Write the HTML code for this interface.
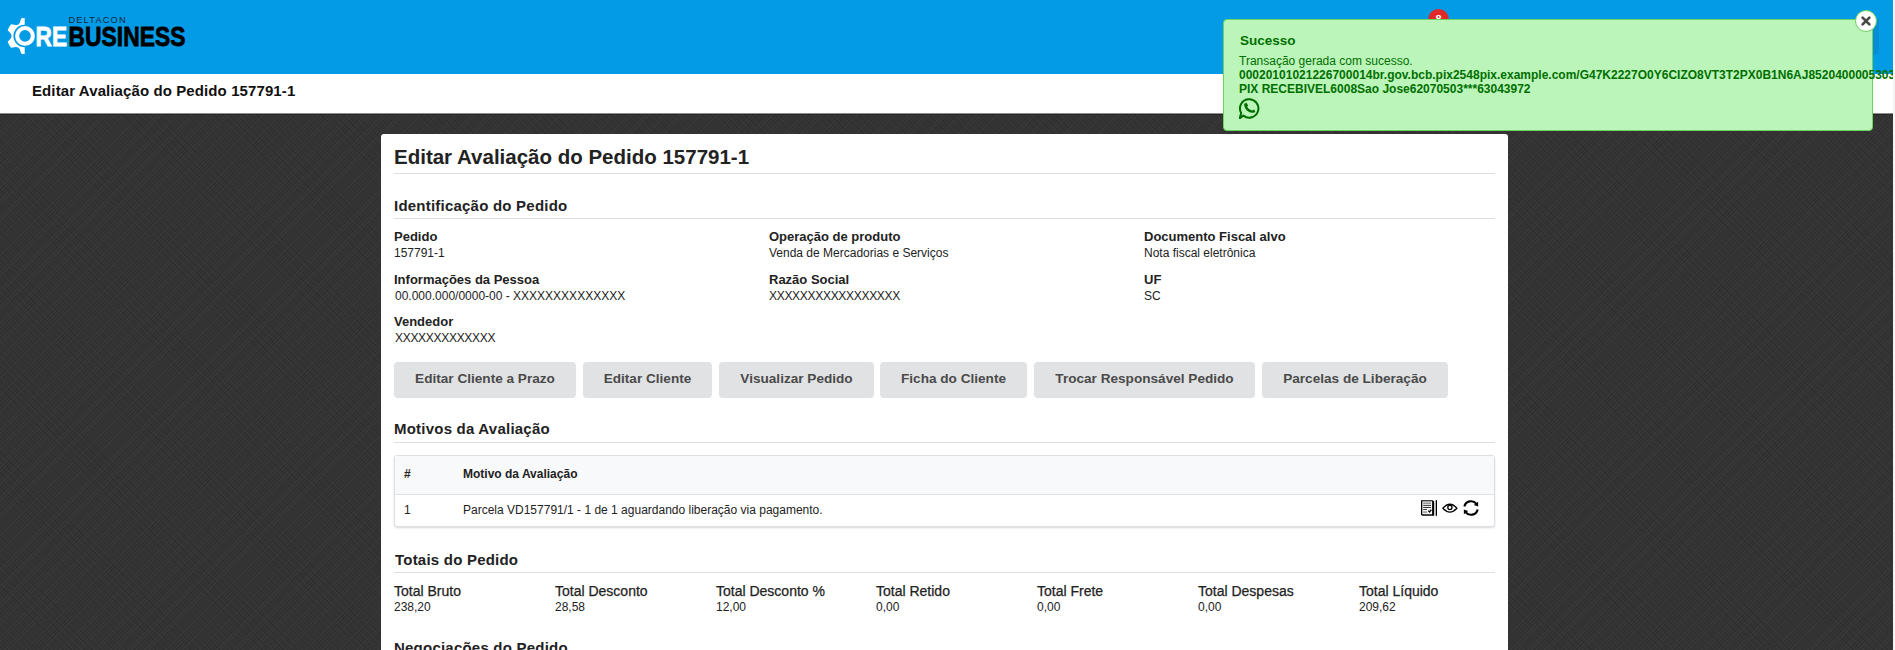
<!DOCTYPE html>
<html><head><meta charset="utf-8">
<style>
*{box-sizing:border-box;margin:0;padding:0}
html,body{width:1895px;height:650px;overflow:hidden;background:#fff}
body{position:relative;font-family:"Liberation Sans",sans-serif;color:#222}
.abs{position:absolute;white-space:nowrap}
#page{position:absolute;left:0;top:0;width:1893px;height:650px;overflow:hidden;
 background-color:#323232;
 background-image:repeating-linear-gradient(-45deg,rgba(255,255,255,0.03) 0 1px,rgba(0,0,0,0) 1px 3px),
 repeating-linear-gradient(45deg,rgba(0,0,0,0.07) 0 1px,rgba(0,0,0,0) 1px 5px);}
#hdr{position:absolute;left:0;top:0;width:1893px;height:74px;background:#039be5}
#sub{position:absolute;left:0;top:74px;width:1893px;height:39px;background:#fff;box-shadow:0 1px 0 #8c8c8c,0 2px 1px rgba(0,0,0,0.18)}
#sub .t{position:absolute;left:32px;top:82px;font-size:15px;font-weight:bold;color:#111;line-height:18px}
#card{position:absolute;left:381px;top:134px;width:1127px;height:600px;background:#fff;border-radius:3px}
.t{position:absolute;white-space:nowrap;line-height:1}
.hr{position:absolute;left:394px;width:1101px;height:1px;background:#dedede}
.lbl{font-size:13px;font-weight:bold;color:#222}
.val{font-size:12px;color:#222}
.sec{font-size:15px;font-weight:bold;color:#222;letter-spacing:0.22px}
.tl{font-size:14px;color:#222;-webkit-text-stroke:0.25px #222}
.btn{position:absolute;top:362px;height:36px;background:#e1e2e4;border-radius:4px;color:#4a4a4a;font-size:13.6px;font-weight:bold;text-align:center;line-height:34px;white-space:nowrap}
</style></head>
<body>
<div id="page">
 <div id="hdr"></div>
 <div id="sub"></div>
</div>

<!-- logo -->
<svg class="abs" style="left:0;top:0" width="200" height="70" viewBox="0 0 200 70">
 <defs><clipPath id="lh"><rect x="0" y="0" width="24.7" height="70"/></clipPath></defs>
 <path clip-path="url(#lh)" fill="#fff" fill-rule="evenodd" d="M29.72,22.93 L28.13,18.33 A18.0,18.0 0 0 0 21.27,18.33 L19.68,22.93 A4.2,4.2 0 0 1 15.89,25.12 L11.12,24.19 A18.0,18.0 0 0 0 7.68,30.14 L10.87,33.81 A4.2,4.2 0 0 1 10.87,38.19 L7.68,41.86 A18.0,18.0 0 0 0 11.12,47.81 L15.89,46.88 A4.2,4.2 0 0 1 19.68,49.07 L21.27,53.67 A18.0,18.0 0 0 0 28.13,53.67 L29.72,49.07 A4.2,4.2 0 0 1 33.51,46.88 L38.28,47.81 A18.0,18.0 0 0 0 41.72,41.86 L38.53,38.19 A4.2,4.2 0 0 1 38.53,33.81 L41.72,30.14 A18.0,18.0 0 0 0 38.28,24.19 L33.51,25.12 A4.2,4.2 0 0 1 29.72,22.93 Z M36.00,36.00 A11.30,11.30 0 1 0 13.40,36.00 A11.30,11.30 0 1 0 36.00,36.00 Z"/>
 <circle cx="25" cy="35.9" r="7.85" fill="none" stroke="#fff" stroke-width="4.1"/>
 <text x="35.6" y="45.8" font-family="Liberation Sans" font-weight="bold" font-size="27.4" fill="#fff" stroke="#fff" stroke-width="0.8" textLength="31.5" lengthAdjust="spacingAndGlyphs">RE</text>
 <text x="68.6" y="45.8" font-family="Liberation Sans" font-weight="bold" font-size="27.4" fill="#000" stroke="#000" stroke-width="0.8" textLength="116.8" lengthAdjust="spacingAndGlyphs">BUSINESS</text>
 <text x="68.4" y="22.8" font-family="Liberation Sans" font-size="9.2" fill="#15263a" textLength="57.2" lengthAdjust="spacing">DELTACON</text>
</svg>
<div class="t" style="left:32px;top:83px;font-size:15px;font-weight:bold;color:#111;letter-spacing:0.1px">Editar Avaliação do Pedido 157791-1</div>

<div id="card"></div>
<div class="t" style="left:394px;top:147px;font-size:20.5px;font-weight:bold">Editar Avaliação do Pedido 157791-1</div>
<div class="hr" style="top:173px"></div>
<div class="t sec" style="left:394px;top:198px">Identificação do Pedido</div>
<div class="hr" style="top:218px"></div>

<div class="t lbl" style="left:394px;top:230px">Pedido</div>
<div class="t val" style="left:394px;top:247px">157791-1</div>
<div class="t lbl" style="left:769px;top:230px">Operação de produto</div>
<div class="t val" style="left:769px;top:247px">Venda de Mercadorias e Serviços</div>
<div class="t lbl" style="left:1144px;top:230px">Documento Fiscal alvo</div>
<div class="t val" style="left:1144px;top:247px">Nota fiscal eletrônica</div>

<div class="t lbl" style="left:394px;top:273px">Informações da Pessoa</div>
<div class="t val" style="left:395px;top:290px">00.000.000/0000-00 - XXXXXXXXXXXXXX</div>
<div class="t lbl" style="left:769px;top:273px">Razão Social</div>
<div class="t val" style="left:769px;top:290px;letter-spacing:-0.3px">XXXXXXXXXXXXXXXXX</div>
<div class="t lbl" style="left:1144px;top:273px">UF</div>
<div class="t val" style="left:1144px;top:290px">SC</div>

<div class="t lbl" style="left:394px;top:315px">Vendedor</div>
<div class="t val" style="left:395px;top:332px;letter-spacing:-0.3px">XXXXXXXXXXXXX</div>

<div class="btn" style="left:394px;width:182px">Editar Cliente a Prazo</div>
<div class="btn" style="left:583px;width:129px">Editar Cliente</div>
<div class="btn" style="left:719px;width:155px">Visualizar Pedido</div>
<div class="btn" style="left:880px;width:147px">Ficha do Cliente</div>
<div class="btn" style="left:1034px;width:221px">Trocar Responsável Pedido</div>
<div class="btn" style="left:1262px;width:186px">Parcelas de Liberação</div>

<div class="t sec" style="left:394px;top:421px">Motivos da Avaliação</div>
<div class="hr" style="top:442px"></div>

<div class="abs" style="left:394px;top:455px;width:1101px;height:72px;border:1px solid #dcdfe3;border-radius:3px;background:#fff;box-shadow:0 1px 2px rgba(0,0,0,0.15)">
 <div class="abs" style="left:0;top:0;width:1099px;height:39px;background:#f8f9fa;border-bottom:1px solid #dee2e6"></div>
</div>
<div class="t" style="left:404px;top:468px;font-size:12px;font-weight:bold">#</div>
<div class="t" style="left:463px;top:468px;font-size:12px;font-weight:bold">Motivo da Avaliação</div>
<div class="t val" style="left:404px;top:504px">1</div>
<div class="t val" style="left:463px;top:504px">Parcela VD157791/1 - 1 de 1 aguardando liberação via pagamento.</div>

<div class="t sec" style="left:395px;top:552px">Totais do Pedido</div>
<div class="hr" style="top:572px"></div>

<div class="t tl" style="left:394px;top:584px">Total Bruto</div>
<div class="t val" style="left:394px;top:601px">238,20</div>
<div class="t tl" style="left:555px;top:584px">Total Desconto</div>
<div class="t val" style="left:555px;top:601px">28,58</div>
<div class="t tl" style="left:716px;top:584px">Total Desconto %</div>
<div class="t val" style="left:716px;top:601px">12,00</div>
<div class="t tl" style="left:876px;top:584px">Total Retido</div>
<div class="t val" style="left:876px;top:601px">0,00</div>
<div class="t tl" style="left:1037px;top:584px">Total Frete</div>
<div class="t val" style="left:1037px;top:601px">0,00</div>
<div class="t tl" style="left:1198px;top:584px">Total Despesas</div>
<div class="t val" style="left:1198px;top:601px">0,00</div>
<div class="t tl" style="left:1359px;top:584px">Total Líquido</div>
<div class="t val" style="left:1359px;top:601px">209,62</div>
<div class="t sec" style="left:394px;top:640px">Negociações do Pedido</div>

<!-- icons -->
<svg class="abs" style="left:1421px;top:500px" width="17" height="16" viewBox="0 0 17 16">
 <path d="M0,0.2 H11.6 L13.2,1.6 V15.8 H1.2 L0,14.6 Z" fill="#000"/>
 <rect x="1.3" y="1.3" width="9.8" height="13" fill="#f4f4f4"/>
 <rect x="2.2" y="2.4" width="7.8" height="1.6" fill="#9a9a9a"/>
 <rect x="2.2" y="4.9" width="7.8" height="0.9" fill="#222"/>
 <rect x="2.2" y="7" width="7.8" height="0.9" fill="#222"/>
 <rect x="2.2" y="9.1" width="3.8" height="0.9" fill="#333"/>
 <rect x="2.2" y="11.3" width="3.8" height="1.6" fill="#9a9a9a"/>
 <path d="M7.3,10.6 L8.6,11.9 L10.3,9.6" fill="none" stroke="#000" stroke-width="1.3"/>
 <rect x="14.7" y="0.2" width="1.3" height="15.6" fill="#000"/>
</svg>
<svg class="abs" style="left:1442px;top:503px" width="16" height="10" viewBox="0 -0.4 16 10">
 <path d="M0.9,4.8 Q7.9,-3.2 14.9,4.8 Q7.9,12.6 0.9,4.8 Z" fill="none" stroke="#000" stroke-width="1.35" stroke-linejoin="round"/>
 <circle cx="7.9" cy="4.1" r="2.1" fill="none" stroke="#000" stroke-width="1.35"/>
</svg>
<svg class="abs" style="left:1463px;top:500px" width="16" height="16" viewBox="0 0 16 16">
 <g fill="none" stroke="#000" stroke-width="2.1">
  <path d="M1.35,6.59 A6.8,6.8 0 0 1 13.4,3.9"/>
  <path d="M14.65,9.41 A6.8,6.8 0 0 1 2.6,12.1"/>
 </g>
 <path d="M15.1,1.7 L15.2,6.4 L10.8,4.9 Z" fill="#000"/>
 <path d="M0.9,14.3 L0.8,9.6 L5.2,11.1 Z" fill="#000"/>
</svg>

<!-- badge -->
<div class="abs" style="left:1428px;top:9px;width:21px;height:21px;border-radius:50%;background:#e02828;color:#fff;font-size:11px;font-weight:bold;text-align:center;line-height:21px">8</div>

<!-- toast -->
<div class="abs" style="left:1850px;top:19px;width:29px;height:36px;background:#078dd5;border-radius:0 0 4px 0"></div>
<div class="abs" style="left:1223px;top:19px;width:650px;height:112px;background:#bbf5b9;border:1px solid #6cd460;border-radius:4px"></div>
<div class="t" style="left:1240px;top:34px;font-size:13.5px;font-weight:bold;color:#006f00">Sucesso</div>
<div class="t" style="left:1239px;top:55px;font-size:12px;color:#006f00">Transação gerada com sucesso.</div>
<div class="t" style="left:1239px;top:69px;font-size:12px;font-weight:bold;color:#006f00">00020101021226700014br.gov.bcb.pix2548pix.example.com/G47K2227O0Y6CIZO8VT3T2PX0B1N6AJ85204000053039865802BR5925</div>
<div class="t" style="left:1239px;top:83px;font-size:12px;font-weight:bold;color:#006f00">PIX RECEBIVEL6008Sao Jose62070503***63043972</div>
<div class="abs" style="left:1855px;top:10px;width:22px;height:22px;border-radius:50%;background:#fff;border:1px solid #6cd460"></div>
<svg class="abs" style="left:1855px;top:10px" width="22" height="22" viewBox="0 0 22 22"><path d="M7.6,7.6 L14.4,14.4 M14.4,7.6 L7.6,14.4" stroke="#4a4a4a" stroke-width="2.7" stroke-linecap="round"/></svg>

<svg class="abs" style="left:1239px;top:98px" width="21" height="21" viewBox="0 0 21 21">
 <path d="M4.4,17.6 A9.2,9.2 0 1 0 2.2,15.0 L0.6,20.4 Z" fill="none" stroke="#006f00" stroke-width="2" stroke-linejoin="round"/>
 <path d="M6.5,5.8 C5.8,9.8 10,14.2 14.4,13.5" fill="none" stroke="#006f00" stroke-width="2.4"/>
 <path d="M5.4,6.2 L7.3,4.6 L9.2,7.6 L7.6,9.0 Z M13.3,12.9 L15.0,11.2 L16.4,13.9 L14.6,14.7 Z" fill="#006f00"/>
</svg>
<!-- right strip -->
<div class="abs" style="left:1893px;top:0;width:2px;height:650px;background:#f4f4f4"></div>

</body></html>
